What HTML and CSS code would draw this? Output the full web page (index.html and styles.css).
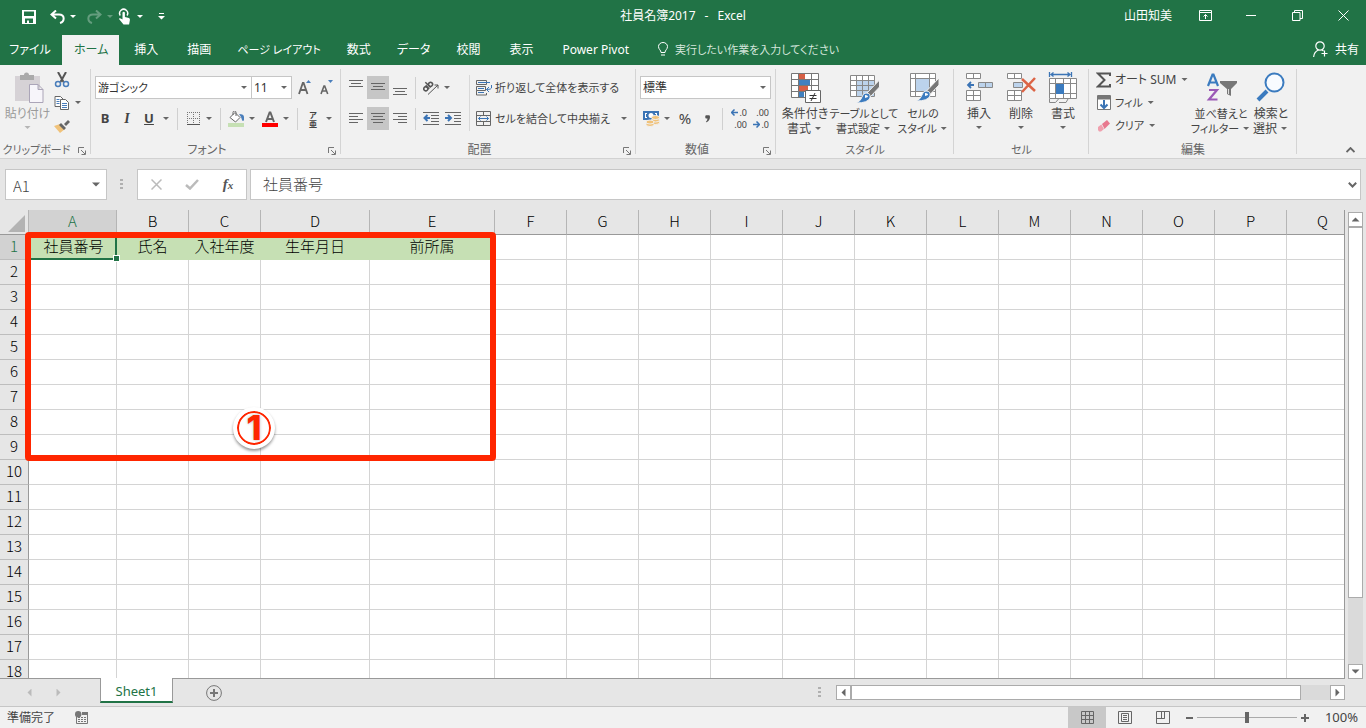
FILE: index.html
```html
<!DOCTYPE html>
<html lang="ja">
<head>
<meta charset="utf-8">
<title>社員名簿2017 - Excel</title>
<link rel="stylesheet" href="styles.css">
</head>
<body>
<header class="titlebar">
  <div class="quick">
    <button class="q-btn" aria-label="上書き保存"><svg width="14" height="14" viewBox="0 0 14 14"><path fill="#fff" fill-rule="evenodd" d="M0 0h14v14H0zM2 1.500v4.500h10V1.500zM3 8.500V13h2v-2.500h2V13h4V8.500z"/></svg></button>
    <button class="q-btn undo" aria-label="元に戻す"><svg width="15" height="14" viewBox="0 0 15 14" fill="none" stroke="#fff" stroke-width="2"><path d="M6 0.500L1.500 4.500L6 8.500M2 4.500H9c6 0 6 7 1 8.500"/></svg></button>
    <span class="caret light"></span>
    <button class="q-btn dim redo" aria-label="やり直し"><svg width="15" height="14" viewBox="0 0 15 14" fill="none" stroke="#fff" stroke-width="2"><path d="M9 0.500L13.500 4.500L9 8.500M13 4.500H6c-6 0-6 7-1 8.500"/></svg></button>
    <span class="caret light dim"></span>
    <button class="q-btn touch" aria-label="タッチ/マウス モードの切り替え"><svg width="14" height="17" viewBox="0 0 14 17"><path d="M2.300 7.500A4 4 0 1 1 9 7.500" fill="none" stroke="#fff" stroke-width="1.500"/><path fill="#fff" d="M4.500 4.500q1.200-1.500 2.400 0V9l4 1q1.300.5 1 2l-.8 4.500H5.500L1 11q0-1.500 3.500.5z"/></svg></button>
    <span class="caret light"></span>
    <button class="q-btn customize" aria-label="クイック アクセス ツール バーのユーザー設定"><svg width="7" height="7" viewBox="0 0 7 7" fill="#fff"><path d="M1 0h5v1H1zM0 3h7L3.500 6.500z"/></svg></button>
  </div>
  <div class="doc-title"><span>社員名簿2017</span><span>-</span><span>Excel</span></div>
  <div class="window-tools">
    <span class="user">山田知美</span>
    <button class="w-btn" aria-label="リボンの表示オプション"><svg width="13" height="11" viewBox="0 0 13 11" fill="none" stroke="#fff"><path d="M.5.5h12v10H.5zM.5 2.500h12M6.500 9V4.500M4.500 6.500l2-2 2 2"/></svg></button>
    <button class="w-btn" aria-label="最小化"><svg width="10" height="2"><path fill="#fff" d="M0 0h10v1H0z"/></svg></button>
    <button class="w-btn" aria-label="元に戻す(縮小)"><svg width="11" height="11" viewBox="0 0 11 11" fill="none" stroke="#fff"><path d="M.5 2.500h7.500v8H.5zM2.500 2.500v-2h8v8H8"/></svg></button>
    <button class="w-btn" aria-label="閉じる"><svg width="11" height="11" viewBox="0 0 11 11" stroke="#fff"><path d="M.5.5l10 10M10.500.5l-10 10"/></svg></button>
  </div>
</header>
<nav class="tabs">
  <button class="tab file">ファイル</button>
  <button class="tab kana active">ホーム</button>
  <button class="tab">挿入</button>
  <button class="tab">描画</button>
  <button class="tab kana narrow">ページ レイアウト</button>
  <button class="tab">数式</button>
  <button class="tab kana">データ</button>
  <button class="tab">校閲</button>
  <button class="tab">表示</button>
  <button class="tab">Power Pivot</button>
  <button class="tab tell narrow"><svg width="10" height="14" viewBox="0 0 10 14" fill="none" stroke="#fff"><path d="M3 10.500C3 8 .5 7.500.5 4.500a4.500 4 0 0 1 9 0C9.500 7.500 7 8 7 10.500zM3 13h4"/></svg>実行したい作業を入力してください</button>
  <button class="tab share"><svg width="15" height="16" viewBox="0 0 15 16" fill="none" stroke="#fff" stroke-width="1.200"><circle cx="7" cy="5" r="4.200"/><path d="M.6 16C1 11.500 3 10 5.500 9M9 9l1.500 1M11.500 9.500v6M8.500 12.500h6"/></svg>共有</button>
</nav>

<section class="ribbon" aria-label="リボン">
  <div class="group g-clip">
    <div class="body">
      <button class="big paste">
        <svg width="32" height="32" viewBox="0 0 32 32"><path fill="#d6d2d6" d="M3 4h25v25H3z"/><path fill="#aaa" d="M8 3h4a2.500 2.500 0 0 1 5 0h5v5H8z"/><path fill="#f7f5fa" stroke="#aba5b8" d="M17.500 12.500H26l5 5v13H17.500zM26 12.500v5h5"/></svg>
        <span>貼り付け</span><i class="caret pale"></i>
      </button>
      <div class="stack">
        <button class="small" aria-label="切り取り"><svg width="16" height="16" viewBox="0 0 16 16" fill="none"><path d="M4 0l5.500 10M12 0L6.500 10" stroke="#555" stroke-width="2"/><circle cx="4" cy="12" r="2.500" stroke="#4a7ebb" stroke-width="1.500"/><circle cx="12" cy="12" r="2.500" stroke="#4a7ebb" stroke-width="1.500"/></svg></button>
        <button class="small" aria-label="コピー"><svg width="16" height="14" viewBox="0 0 16 14" fill="#fff" stroke="#666"><path d="M1 .5h5.500L9 3v7.500H1z"/><path d="M6.500 3.500h5l3 3v7h-8z"/><path stroke="#4a7ebb" d="M2.500 3.500h3M2.500 5.500h3M2.500 7.500h3M8 7.500h5M8 9.500h5M8 11.500h5"/></svg><i class="caret"></i></button>
        <button class="small" aria-label="書式のコピー/貼り付け"><svg width="16" height="14" viewBox="0 0 16 14"><path fill="#f0c27a" d="M0 7l6-2 5 5-5 4z"/><path fill="#666" d="M7 4l5 5-2 2-5-5zM10 5l4-4 2 2-4 4z"/></svg></button>
      </div>
    </div>
    <div class="g-label narrow">クリップボード<svg class="launch" width="8" height="8" viewBox="0 0 8 8" fill="none" stroke="#777"><path d="M.5 6V.5H6M3 3l4 4M7.500 3.500v4h-4"/></svg></div>
  </div>

  <div class="group g-font">
    <div class="body rows">
      <div class="row">
        <span class="combo font-name"><select class="narrow" aria-label="フォント"><option>游ゴシック</option></select><i class="caret"></i></span><span class="combo font-size"><select aria-label="フォント サイズ"><option>11</option></select><i class="caret"></i></span>
        <button class="ib grow" aria-label="フォント サイズの拡大"><svg width="13" height="16" viewBox="0 0 13 16" fill="none"><path stroke="#666" stroke-width="1.800" d="M1 14L4.800 3h.8L9.500 14M2.500 10h6"/><path fill="#4a7ebb" d="M8 3l2.500-3L13 3z"/></svg></button>
        <button class="ib" aria-label="フォント サイズの縮小"><svg width="13" height="16" viewBox="0 0 13 16" fill="none"><path stroke="#666" stroke-width="1.600" d="M1 14l3-8h.7l3 8M2.200 11h4.300"/><path fill="#4a7ebb" d="M8 0l2.500 3L13 0z"/></svg></button>
      </div>
      <div class="row">
        <button class="ib bold">B</button><button class="ib ital">I</button><button class="ib under">U</button><i class="caret"></i><i class="sep"></i>
        <button class="ib" aria-label="罫線"><svg width="13" height="13" viewBox="0 0 13 13" stroke="#777"><path stroke-dasharray="1 1" d="M.5 0v12M6.500 0v12M12.500 0v12M0 .5h13M0 6.500h13"/><path stroke="#555" d="M0 12.500h13"/></svg></button><i class="caret"></i><i class="sep"></i>
        <button class="ib" aria-label="塗りつぶしの色"><svg width="16" height="16" viewBox="0 0 16 16"><path fill="#c6e0b4" d="M0 12h16v4H0z"/><path fill="#fff" stroke="#666" d="M2 6.500l5-5L12 6.500l-4.500 4.500zM5 4V1.500a1.500 1.500 0 0 1 3 0V5"/><path fill="#4a7ebb" d="M11 3q5 0 5 3v3q-1 2-2 0l-1-3z"/></svg></button><i class="caret"></i>
        <button class="ib color" aria-label="フォントの色"><svg width="16" height="16" viewBox="0 0 16 16"><path fill="red" d="M0 12h16v4H0z"/><path fill="none" stroke="#666" stroke-width="2" d="M4 11L7.600 1.500h.8L12 11M5.500 8h5"/></svg></button><i class="caret"></i><i class="sep"></i>
        <button class="ib ruby"><span>ア</span><span>亜</span></button><i class="caret"></i>
      </div>
    </div>
    <div class="g-label">フォント<svg class="launch" width="8" height="8" viewBox="0 0 8 8" fill="none" stroke="#777"><path d="M.5 6V.5H6M3 3l4 4M7.500 3.500v4h-4"/></svg></div>
  </div>

  <div class="group g-align">
    <div class="body">
      <div class="rows">
        <div class="row">
          <button class="ib" aria-label="上揃え"><svg width="14" height="17" viewBox="0 0 14 17" stroke="#666"><path d="M0 1.500h14M2 4.500h10M0 7.500h14"/></svg></button><button class="ib on" aria-label="上下中央揃え"><svg width="14" height="17" viewBox="0 0 14 17" stroke="#666"><path d="M0 4.500h14M2 7.500h10M0 10.500h14"/></svg></button><button class="ib" aria-label="下揃え"><svg width="14" height="17" viewBox="0 0 14 17" stroke="#666"><path d="M0 9.500h14M2 12.500h10M0 15.500h14"/></svg></button><i class="sep"></i>
          <button class="ib" aria-label="方向"><svg width="16" height="15" viewBox="0 0 16 15" fill="none" stroke="#555"><g transform="rotate(-45 6 7)" stroke-width="1.500"><circle cx="2.500" cy="6" r="2"/><path d="M4.800 3.500V8.500M6.800 1V8.500"/><circle cx="9" cy="6.200" r="2"/></g><path d="M5 14.500L15 5M11.500 5H15v3.500"/></svg></button><i class="caret"></i>
        </div>
        <div class="row">
          <button class="ib" aria-label="左揃え"><svg width="14" height="11" viewBox="0 0 14 11" stroke="#666"><path d="M0 .5h14M0 3.500h9M0 6.500h14M0 9.500h9"/></svg></button><button class="ib on" aria-label="中央揃え"><svg width="14" height="11" viewBox="0 0 14 11" stroke="#666"><path d="M0 .5h14M2 3.500h10M0 6.500h14M2 9.500h10"/></svg></button><button class="ib" aria-label="右揃え"><svg width="14" height="11" viewBox="0 0 14 11" stroke="#666"><path d="M0 .5h14M5 3.500h9M0 6.500h14M5 9.500h9"/></svg></button><i class="sep"></i>
          <button class="ib" aria-label="インデントを減らす"><svg width="16" height="13" viewBox="0 0 16 13" stroke="#666"><path d="M0 .5h16M8 3.500h8M8 6.500h8M8 9.500h8M0 12.500h16"/><path stroke="#3b74b5" stroke-width="2" fill="none" d="M4.500 3L1.500 6l3 3M2 6h5"/></svg></button><button class="ib" aria-label="インデントを増やす"><svg width="16" height="13" viewBox="0 0 16 13" stroke="#666"><path d="M0 .5h16M9 3.500h7M9 6.500h7M9 9.500h7M0 12.500h16"/><path stroke="#3b74b5" stroke-width="2" fill="none" d="M3 3l3 3-3 3M0 6h6"/></svg></button>
        </div>
      </div>
      <div class="rows wide">
        <div class="row"><button class="text-btn narrow"><svg width="16" height="16" viewBox="0 0 16 16" fill="none" stroke="#666"><path d="M.5.5h10v4H.5zM.5 6.500h9v4H.5zM.5 10.500v4.500h10v-2"/><path stroke="#3b74b5" d="M2 2.500h12M2 8.500h6M2 12.500h6M15.500 5v3q0 1.500-5 1.500M13 7l-2.500 2.500L13 12"/></svg>折り返して全体を表示する</button></div>
        <div class="row"><button class="text-btn narrow"><svg width="16" height="16" viewBox="0 0 16 16" fill="none" stroke="#666"><path d="M.5.5h14v14H.5zM.5 4.500h14M.5 10.500h14M7.500.5v4M7.500 10.500v4"/><path stroke="#3b74b5" d="M2.500 7.500h10M4.500 5.500l-2 2 2 2M10.500 5.500l2 2-2 2"/></svg>セルを結合して中央揃え</button><i class="caret end"></i></div>
      </div>
    </div>
    <div class="g-label">配置<svg class="launch" width="8" height="8" viewBox="0 0 8 8" fill="none" stroke="#777"><path d="M.5 6V.5H6M3 3l4 4M7.500 3.500v4h-4"/></svg></div>
  </div>

  <div class="group g-num">
    <div class="body rows">
      <div class="row"><span class="combo fmt"><select aria-label="数値の書式"><option>標準</option></select><i class="caret"></i></span></div>
      <div class="row">
        <button class="ib" aria-label="通貨表示形式"><svg width="17" height="16" viewBox="0 0 17 16"><path fill="#3b74b5" d="M0 0h16v9H0z"/><path fill="#fff" d="M2 2h2v1H3v3h1v1H2zM14 2h-2v1h1v3h1z"/><circle cx="8" cy="4.500" r="2.500" fill="#fff"/><g fill="#f0c27a" stroke="#f1f1f1"><ellipse cx="12.500" cy="11.500" rx="4" ry="2"/><ellipse cx="12.500" cy="9" rx="4" ry="2"/><ellipse cx="12.500" cy="6.500" rx="4" ry="2"/><ellipse cx="7" cy="13.500" rx="4" ry="2"/><ellipse cx="7" cy="11" rx="4" ry="2"/></g></svg></button><i class="caret"></i>
        <button class="ib pct">%</button><button class="ib comma" aria-label="桁区切りスタイル"><svg width="5" height="8" viewBox="0 0 6 9"><path fill="#555" d="M1 0h4q1 0 1 2 0 4-4 6.500L1 8q2-2 2-4H1Q-.5 2 1 0z"/></svg></button><i class="sep"></i>
        <button class="ib dec" aria-label="小数点以下の表示桁数を増やす"><span><svg width="7" height="7" viewBox="0 0 7 7"><path d="M3.500.5l-3 3 3 3M.5 3.500H7" fill="none" stroke="#3b74b5" stroke-width="1.500"/></svg>.0</span><span>.00</span></button><button class="ib dec" aria-label="小数点以下の表示桁数を減らす"><span>.00</span><span><svg width="7" height="7" viewBox="0 0 7 7"><path d="M3.500.5l3 3-3 3M6.500 3.500H0" fill="none" stroke="#3b74b5" stroke-width="1.500"/></svg>.0</span></button>
      </div>
    </div>
    <div class="g-label">数値<svg class="launch" width="8" height="8" viewBox="0 0 8 8" fill="none" stroke="#777"><path d="M.5 6V.5H6M3 3l4 4M7.500 3.500v4h-4"/></svg></div>
  </div>

  <div class="group g-style">
    <div class="body">
      <button class="big w52"><svg width="32" height="32" viewBox="0 0 32 32"><path fill="#fff" stroke="#777" d="M2.500 1.500h27v24h-27zM9.500 1.500v24M22.500 1.500v24M2.500 7.500h27M2.500 13.500h27M2.500 19.500h27"/><path fill="#d65f45" d="M10 2h6v5h-6zM10 14h9v5h-9z"/><path fill="#4080bf" d="M10 8h11v5H10zM10 20h5v5h-5z"/><path fill="#fff" stroke="#666" d="M16.500 18.500h15v12h-15z"/><path stroke="#333" d="M20.500 23.500h7M20.500 26.500h7M26 21l-4 8"/></svg><span>条件付き<br>書式<i class="caret"></i></span></button>
      <button class="big w66 narrow"><svg width="32" height="32" viewBox="0 0 32 32"><path fill="#fff" d="M2 3h25v22H2z"/><path fill="#bcd3ec" d="M8 9h18v15H8z"/><path fill="none" stroke="#888" d="M2.500 3.500h24v21h-24zM8.500 3.500v21M14.500 3.500v21M20.500 3.500v21M2.500 8.500h24M2.500 13.500h24M2.500 18.500h24"/><path fill="#777" stroke="#f1f1f1" d="M31.500 8v7l-9 9.500-3.500-3.500z"/><path fill="#3b7bbf" stroke="#f1f1f1" d="M18 21q5 0 4 5-2 5-14 5 5-2 6-6 1-4 4-4z"/><path fill="#fff" d="M17 23q3 0 3 2l-3 1z"/></svg><span>テーブルとして<br>書式設定<i class="caret"></i></span></button>
      <button class="big w52 narrow"><svg width="32" height="32" viewBox="0 0 32 32"><path fill="#fff" stroke="#888" d="M3.500 1.500h25v23h-25zM8.500 1.500v23M22.500 1.500v23M3.500 6.500h25M3.500 19.500h25"/><path fill="#bcd3ec" d="M9 7h13v12H9z"/><path fill="#777" stroke="#f1f1f1" d="M32 6v7l-9 9.500-3.500-3.500z"/><path fill="#3b7bbf" stroke="#f1f1f1" d="M19 19q5 0 4 5-2 5-14 5 5-2 6-6 1-4 4-4z"/><path fill="#fff" d="M18 21q3 0 3 2l-3 1z"/></svg><span>セルの<br>スタイル<i class="caret"></i></span></button>
    </div>
    <div class="g-label narrow">スタイル</div>
  </div>

  <div class="group g-cell">
    <div class="body">
      <button class="big w42"><svg width="28" height="32" viewBox="0 0 28 32" fill="#fff" stroke="#888"><path d="M1.500 1.500h14v5h-14zM8.500 1.500v5M1.500 18.500h14v10h-14zM8.500 18.500v10M1.500 23.500h14"/><path fill="#bcd3ec" d="M13.500 10.500h14v5h-14zM20.500 10.500v5"/><path stroke="#3b74b5" stroke-width="1.800" fill="none" d="M6 10l-3 3 3 3M3 13h6"/></svg><span>挿入</span><i class="caret"></i></button>
      <button class="big w42"><svg width="30" height="32" viewBox="0 0 30 32" fill="#fff" stroke="#888"><path d="M1.500 1.500h14v5h-14zM8.500 1.500v5M1.500 18.500h14v10h-14zM8.500 18.500v10M1.500 23.500h14"/><path fill="#bcd3ec" d="M7.500 10.500h9v5h-9z"/><path stroke="#dc6445" stroke-width="2.500" d="M16 7l13 12M29 6L16 20"/></svg><span>削除</span><i class="caret"></i></button>
      <button class="big w42"><svg width="30" height="32" viewBox="0 0 30 32" fill="#fff" stroke="#888"><path d="M1.500 6.500h27v20h-27zM7.500 6.500v20M15.500 6.500v20M22.500 6.500v20M1.500 11.500h27M1.500 21.500h27"/><path fill="none" d="M1.500 27v3.500h6l3-3.500M11 30.500h7l2-3.500"/><path fill="#3b7bbf" stroke="none" d="M8 12h8v10H8z"/><path stroke="#3b74b5" stroke-width="1.300" fill="none" d="M1.500 0v5M23.500 0v5M3 2.500h19M5.500.5l-2.500 2 2.500 2M19.500.5l2.500 2-2.500 2"/></svg><span>書式</span><i class="caret"></i></button>
    </div>
    <div class="g-label narrow">セル</div>
  </div>

  <div class="group g-edit">
    <div class="body">
      <div class="stack edit-stack">
        <button class="small"><svg width="16" height="16" viewBox="0 0 16 16" fill="none" stroke="#555" stroke-width="2"><path d="M14 4V1.500H2L8.500 8 2 14.500h12V12"/></svg><span class="sum">オート SUM</span><i class="caret"></i></button>
        <button class="small narrow"><svg width="16" height="16" viewBox="0 0 16 16" fill="#fff" stroke="#777"><path d="M1.500.5h13v14h-13z"/><path fill="#777" d="M2 1h12v3H2z"/><path stroke="#3b74b5" stroke-width="2" fill="none" d="M8 5v8M4.500 9.500L8 13l3.500-3.500"/></svg><span>フィル</span><i class="caret"></i></button>
        <button class="small narrow"><svg width="16" height="16" viewBox="0 0 16 16"><path fill="#e8788e" d="M6 6l5-4 3 3.500-5.500 5.500z"/><path fill="#f0a0ae" d="M2 9l3.300-2.500L8 11l-3 2.500H3L2 12z"/></svg><span>クリア</span><i class="caret"></i></button>
      </div>
      <button class="big w54 narrow"><svg width="32" height="32" viewBox="0 0 32 32" fill="none"><path stroke="#3b7bbf" stroke-width="2.200" d="M3 14L7.500 2.500h1L13 14M5 10.500h6"/><path stroke="#9b59b6" stroke-width="2.200" d="M4 18h8L4 27.500h8.500"/><path fill="#777" d="M15 9h17v2l-6 6v7l-4-2v-5l-7-6z"/><path stroke="#ddd" d="M23.500 17v5"/></svg><span>並べ替えと<br>フィルター<i class="caret"></i></span></button>
      <button class="big w46"><svg width="30" height="32" viewBox="0 0 30 32" fill="#f8fbff" stroke="#3b7bbf"><path stroke-width="4" d="M2 28l9-9"/><circle cx="18.500" cy="10.500" r="9" stroke-width="2"/></svg><span>検索と<br>選択<i class="caret"></i></span></button>
    </div>
    <div class="g-label">編集</div>
  </div>
  <button class="collapse" aria-label="リボンを折りたたむ"><svg width="9" height="6" viewBox="0 0 9 6" fill="none" stroke="#666" stroke-width="1.800"><path d="M.5 5l4-4 4 4"/></svg></button>
</section>

<section class="formula">
  <div class="box name-box"><input value="A1" aria-label="名前ボックス"><i class="tri down"></i></div>
  <span class="dots"></span>
  <div class="box fx">
    <button aria-label="キャンセル"><svg width="11" height="11" viewBox="0 0 11 11" stroke="#bbb" stroke-width="1.500"><path d="M.5.5l10 10M10.500.5l-10 10"/></svg></button>
    <button aria-label="入力"><svg width="14" height="11" viewBox="0 0 14 11" fill="none" stroke="#bbb" stroke-width="2.500"><path d="M1 6l4 3.500L13 1"/></svg></button>
    <button class="fn" aria-label="関数の挿入">f<sub>x</sub></button>
  </div>
  <div class="box entry"><input value="社員番号" aria-label="数式バー"><svg width="9" height="6" viewBox="0 0 9 6" fill="none" stroke="#666" stroke-width="2"><path d="M.8.8l3.700 3.700L8.200.8"/></svg></div>
</section>

<main class="work">
  <div class="sheet">
    <table>
      <colgroup><col class="c-row"><col class="c-a"><col class="c-n"><col class="c-n"><col class="c-d"><col class="c-e"><col class="c-n" span="12"></colgroup>
      <thead><tr id="cols"><th class="corner"><svg width="17" height="17" viewBox="0 0 17 17"><path fill="#b3b3b3" d="M17 0v17H0z"/></svg></th></tr></thead>
      <tbody id="rows">
        <tr><th class="sel">1</th><td class="head cur">社員番号<i class="handle"></i></td><td class="head">氏名</td><td class="head">入社年度</td><td class="head">生年月日</td><td class="head">前所属</td></tr>
      </tbody>
    </table>
    <div class="mark"><span class="num">1</span></div>
  </div>
  <div class="vscroll">
    <button class="sb" aria-label="上へ"><i class="tri up"></i></button>
    <div class="track"><div class="thumb"></div></div>
    <button class="sb" aria-label="下へ"><i class="tri down"></i></button>
  </div>
</main>

<div class="sheetbar">
  <div class="navs"><button aria-label="前のシート"><i class="tri left"></i></button><button aria-label="次のシート"><i class="tri right"></i></button></div>
  <button class="sheet-tab">Sheet1</button>
  <button class="add" aria-label="新しいシート"><svg width="16" height="16" viewBox="0 0 16 16" fill="none" stroke="#777"><circle cx="8" cy="8" r="7.400"/><path stroke-width="2" d="M8 4v8M4 8h8"/></svg></button>
  <span class="dots"></span>
  <div class="hscroll">
    <button class="sb" aria-label="左へ"><i class="tri left"></i></button>
    <div class="track"><div class="thumb"></div></div>
    <button class="sb" aria-label="右へ"><i class="tri right"></i></button>
  </div>
</div>

<footer class="status">
  <span>準備完了</span>
  <svg class="macro" width="14" height="13" viewBox="0 0 14 13"><path fill="none" stroke="#777" d="M1.500 6v6.500h11V1"/><path fill="#777" d="M7 1h6v3H7zM3 6h2v1H3zm3 0h2v1H6zm3 0h2v1H9zM3 8h2v1H3zm3 0h2v1H6zm3 0h2v1H9zM3 10h2v1H3zm3 0h2v1H6zm3 0h2v1H9z"/><circle cx="3.200" cy="3.200" r="3.200" fill="#777"/></svg>
  <div class="views">
    <button class="on" aria-label="標準"><svg width="13" height="13" viewBox="0 0 13 13" fill="none" stroke="#666"><path d="M.5.5h12v12H.5zM4.500.5v12M8.500.5v12M.5 4.500h12M.5 8.500h12"/></svg></button>
    <button aria-label="ページ レイアウト"><svg width="14" height="13" viewBox="0 0 14 13" fill="none" stroke="#666"><path d="M.5.5h13v12H.5zM3.500 2.500h7v8h-7zM5 4.500h4M5 6.500h4M5 8.500h4"/></svg></button>
    <button aria-label="改ページ プレビュー"><svg width="14" height="13" viewBox="0 0 14 13" fill="none" stroke="#666"><path d="M.5.5h13v12H.5zM5.500.5v7M8.500.5v7h-8M8.500 7.500V.5"/></svg></button>
  </div>
  <button class="zb" aria-label="縮小"><svg width="7" height="8"><path fill="#666" d="M0 3h7v2H0z"/></svg></button>
  <input class="zoom" type="range" min="0" max="100" value="50" aria-label="ズーム">
  <button class="zb" aria-label="拡大"><svg width="8" height="8"><path fill="#666" d="M0 3h8v2H0zM3 0h2v8H3z"/></svg></button>
  <span class="pctv">100%</span>
</footer>
<script src="grid.js"></script>
</body>
</html>
```
FILE: grid.js
```javascript
const COLS = "ABCDEFGHIJKLMNOPQ".split("");
const head = document.getElementById("cols");
COLS.forEach((name, i) => {
  const th = document.createElement("th");
  th.textContent = name;
  if (i === 0) th.className = "sel";
  head.appendChild(th);
});
const body = document.getElementById("rows");
const first = body.rows[0];
while (first.cells.length < COLS.length + 1) first.insertCell();
for (let r = 2; r <= 18; r++) {
  const tr = body.insertRow();
  const th = document.createElement("th");
  th.textContent = r;
  tr.appendChild(th);
  COLS.forEach(() => tr.insertCell());
}
```
FILE: styles.css
```css
* { box-sizing: border-box; }
body {
  margin: 0;
  height: 100vh;
  display: flex;
  flex-direction: column;
  overflow: hidden;
  background: #e6e6e6;
  color: #444;
  font: 12px/15px "Noto Sans", "Noto Sans CJK JP", sans-serif;
  font-feature-settings: "palt";
}
button, input, select {
  font: inherit;
  font-feature-settings: inherit;
  color: inherit;
  background: none;
  border: 0;
  padding: 0;
  margin: 0;
}
button { display: flex; align-items: center; justify-content: center; white-space: nowrap; }
svg { display: block; flex: none; }
.narrow { font-size: 11px; }
.caret {
  flex: none;
  width: 10px;
  height: 3px;
  background: #666;
  clip-path: polygon(2px 0, 8px 0, 5px 3px);
}
.caret.light { background: #fff; }
.caret.pale { background: #b5b5b5; }
.dim { opacity: 0.3; }

/* Title bar */
.titlebar {
  display: grid;
  grid-template-columns: 1fr auto 1fr;
  align-items: center;
  height: 35px;
  flex: none;
  padding-bottom: 4px;
  background: #217346;
  color: #fff;
}
.quick { display: flex; align-items: center; padding: 2px 0 0 18px; }
.q-btn { width: 22px; height: 22px; }
.undo { margin-left: 6px; }
.redo { margin-left: 5px; }
.touch { width: 20px; }
.customize { margin-left: 5px; }
.doc-title { display: flex; gap: 9px; }
.window-tools { display: flex; align-items: center; justify-content: flex-end; }
.user { margin-right: 10px; }
.w-btn { width: 46px; height: 30px; }

/* Tabs */
.tabs { display: flex; height: 30px; flex: none; background: #217346; color: #fff; }
.tab { padding: 0 14px 2px 15px; }
.tab.file { width: 62px; padding: 0 2px 2px 0; }
.tab.kana { padding: 0 11px 2px 12px; }
.tab.active { background: #f1f1f1; color: #217346; }
.tab.tell { gap: 7px; color: #d5e6dc; }
.tab.share { margin-left: auto; padding: 0 7px 2px; gap: 7px; }

/* Ribbon */
.ribbon { display: flex; flex: none; height: 94px; background: #f1f1f1; border-bottom: 1px solid #d2d2d2; }
.group { position: relative; display: flex; flex-direction: column; flex: none; }
.group::after { content: ""; position: absolute; right: 0; top: 4px; bottom: 4px; width: 1px; background: #d4d4d4; }
.g-clip { width: 91px; }
.g-font { width: 250px; }
.g-align { width: 295px; }
.g-num { width: 140px; }
.g-style { width: 178px; }
.g-cell { width: 135px; }
.g-edit { width: 208px; }
.body { display: flex; height: 76px; }
.g-label { position: relative; padding: 1px 18px 0 0; text-align: center; color: #666; white-space: nowrap; }
.g-style .g-label, .g-cell .g-label, .g-edit .g-label { padding-right: 0; }
.launch { position: absolute; right: 5px; top: 6px; }
.rows { display: flex; flex-direction: column; gap: 8px; padding: 11px 0 0 4px; }
.g-font .rows { padding-left: 3px; }
.row { display: flex; align-items: center; height: 23px; }
.ib { width: 22px; height: 23px; flex: none; }
.ib.on { background: #c6c6c6; }
.sep { flex: none; width: 1px; height: 22px; background: #d0d0d0; margin: 0 4px 0 6px; }
.combo { display: flex; align-items: center; height: 23px; background: #fff; border: 1px solid #c6c6c6; }
.combo select { flex: 1; min-width: 0; appearance: none; padding-left: 2px; color: #333; }
.combo .caret { margin-right: 2px; }
.font-name { width: 157px; margin-left: 1px; }
.font-size { width: 40px; border-left: 0; }
.fmt { width: 131px; }
.grow { margin-left: 1px; }
.bold, .under { font-weight: 700; font-size: 13px; }
.ital { font: italic 700 14px "Liberation Serif", serif; }
.under { text-decoration: underline; }
.under + .caret { margin-left: 1px; }
.color { margin-left: 2px; }
.ruby { flex-direction: column; font-size: 8px; line-height: 9px; font-weight: 700; }
.g-align .sep { margin: 0 4px; }
.g-align .body > .rows { width: 128px; }
.g-align .body > .wide { width: 166px; padding-left: 7px; position: relative; }
.wide::before { content: ""; position: absolute; left: 0; top: 10px; height: 56px; width: 1px; background: #d8d8d8; }
.text-btn { gap: 3px; }
.caret.end { margin-left: auto; margin-right: 6px; }
.pct { font-size: 15px; margin-left: 2px; }
.g-num .sep { margin: 0 5px 0 4px; }
.dec { flex-direction: column; align-items: flex-end; padding-right: 3px; font-size: 9px; line-height: 12px; }
.dec span { display: flex; align-items: center; gap: 1px; }
.stack { display: flex; flex-direction: column; padding-top: 3px; }
.small { height: 23px; justify-content: flex-start; }
.small .caret { margin-left: 3px; }
.g-clip .stack { padding-left: 4px; }
.big { flex-direction: column; justify-content: flex-start; padding-top: 7px; }
.big > span { margin-top: 2px; text-align: center; }
.big span .caret { display: inline-block; vertical-align: 3px; margin-left: 2px; }
.big > .caret { margin-top: 5px; }
.paste { width: 50px; padding-left: 5px; color: #9a9a9a; }
.g-style .body { padding-left: 3px; }
.g-cell .body { padding-left: 4px; }
.w42 { width: 42px; }
.w46 { width: 46px; }
.w52 { width: 52px; }
.w54 { width: 54px; }
.w66 { width: 66px; }
.edit-stack { width: 105px; padding-left: 7px; }
.edit-stack .small { gap: 3px; }
.edit-stack .small .caret { margin-left: 0; }
.collapse { margin: auto 9px 3px auto; padding: 2px; }

/* Formula bar */
.formula { display: flex; flex: none; padding: 10px 5px; height: 51px; }
.box { display: flex; align-items: center; background: #fff; border: 1px solid #c6c6c6; }
.box input { flex: 1; min-width: 0; height: 29px; outline: 0; }
.name-box { width: 102px; padding: 0 6px 0 7px; }
.name-box input { padding-top: 2px; }
.dots { width: 3px; height: 11px; margin: auto 14px auto 13px; background: repeating-linear-gradient(#b0b0b0 0 2px, transparent 2px 4px); }
.fx { width: 110px; margin-right: 3px; }
.fx button { width: 36px; }
.fn { font: italic 700 15px "Liberation Serif", serif; color: #555; }
.fn sub { font-size: 11px; line-height: 10px; vertical-align: -2px; }
.entry { flex: 1; padding: 0 3px 0 12px; }
.box input, .sheet { font-family: "Noto Sans CJK JP", sans-serif; font-weight: 300; font-size: 15px; font-feature-settings: normal; }
.entry input { padding-bottom: 3px; }

/* Worksheet */
.work { display: flex; flex: 1; min-height: 0; }
.sheet { position: relative; flex: 1; min-width: 0; overflow: hidden; border-right: 1px solid #999; border-bottom: 1px solid #999; background: #fff; color: #000; line-height: 20px; }
table { table-layout: fixed; width: 1359px; border-collapse: separate; border-spacing: 0; }
.c-row { width: 29px; }
.c-a { width: 88px; }
.c-n { width: 72px; }
.c-d { width: 109px; }
.c-e { width: 125px; }
th, td { height: 25px; padding: 0 0 2px; text-align: center; white-space: nowrap; border-right: 1px solid #d4d4d4; border-bottom: 1px solid #d4d4d4; }
th { background: #e6e6e6; font-weight: inherit; }
thead th { border-right-color: #b5b5b5; border-bottom-color: #999; }
tbody th { border-right-color: #999; border-bottom-color: #bdbdbd; }
.corner svg { margin: 4px 3px 0 auto; }
th.sel { background: #d2d2d2; color: #217346; }
.head { position: relative; background: #c6e0b4; border-color: #c6e0b4; }
.cur { border-right: 2px solid #217346; border-bottom: 2px solid #217346; }
td.cur { padding: 0 0 1px 3px; }
.handle { position: absolute; right: -5px; bottom: -4px; z-index: 1; width: 7px; height: 7px; background: #217346; border: 1px solid #fff; }
.mark { position: absolute; left: 25px; top: 22px; width: 471px; height: 229px; border: 6px solid #ff2600; border-radius: 4px; }
.num {
  position: absolute;
  left: 202px;
  bottom: 6px;
  width: 42px;
  height: 42px;
  border: 4px solid #fff;
  border-radius: 50%;
  background: #fff;
  box-shadow: 0 2px 3px rgba(0, 0, 0, 0.4), inset 0 0 0 2px #ff2600;
  color: #ff2600;
  font: 800 34px/34px Inter, "Noto Sans", sans-serif;
  text-align: center;
  text-shadow: 0 0 3px rgba(0, 0, 0, 0.3);
}

/* Scroll bars */
.track { flex: 1; background: #dadada; }
.thumb { background: #fff; border: 1px solid #ababab; }
.sb { flex: none; width: 15px; height: 15px; background: #fff; border: 1px solid #ababab; }
.vscroll { display: flex; flex-direction: column; padding: 2px 3px 0; }
.vscroll .thumb { height: 85%; }
.tri { flex: none; width: 8px; height: 8px; background: #666; }
.up { clip-path: polygon(0 6px, 4px 2px, 8px 6px); }
.down { clip-path: polygon(0 2px, 4px 6px, 8px 2px); }
.left { clip-path: polygon(6px 0, 2px 4px, 6px 8px); }
.right { clip-path: polygon(2px 0, 6px 4px, 2px 8px); }

/* Sheet tabs */
.sheetbar { display: flex; align-items: center; flex: none; height: 27px; padding-right: 21px; }
.navs { display: flex; width: 100px; padding-left: 15px; }
.navs button { width: 29px; height: 20px; }
.navs .tri { background: #bbb; }
.sheet-tab { position: relative; align-self: flex-start; width: 73px; height: 25px; margin-top: -1px; padding-top: 3px; background: #fff; border: 1px solid #999; border-top: 0; border-bottom: 2px solid #217346; color: #217346; font-size: 13px; }
.add { margin-left: 33px; }
.sheetbar .dots { margin: auto 15px auto auto; }
.hscroll { display: flex; width: 509px; }
.hscroll .thumb { width: 94%; height: 15px; }

/* Status bar */
.status { display: flex; align-items: center; flex: none; height: 22px; padding: 0 8px 0 7px; background: #f1f1f1; border-top: 1px solid #c6c6c6; }
.macro { margin-left: 20px; }
.views { display: flex; align-self: stretch; margin-left: auto; }
.views button { width: 38px; }
.views .on { background: #c8c8c8; }
.zb { width: 15px; height: 20px; }
.zoom { appearance: none; width: 100px; height: 12px; background: linear-gradient(#aaa, #aaa) center / 100% 1px no-repeat; }
.zoom::-webkit-slider-thumb { appearance: none; width: 4px; height: 11px; background: #666; }
.pctv { width: 46px; text-align: right; font-size: 13px; }
```
